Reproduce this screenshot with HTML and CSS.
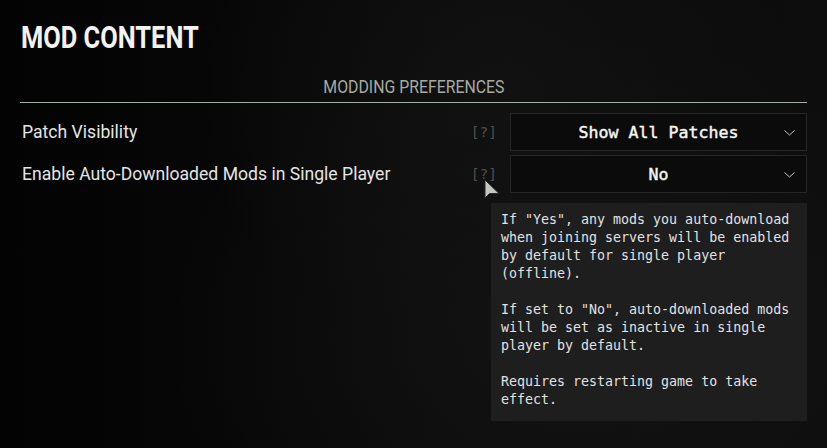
FILE: index.html
```html
<!DOCTYPE html>
<html lang="en">
<head>
    <meta charset="UTF-8">
    <meta name="viewport" content="width=device-width, initial-scale=1.0">
    <title>Mod Content</title>
    <link rel="stylesheet" href="styles.css">
</head>
<body>
    <main class="panel">
        <h1 class="title"><span>MOD CONTENT</span></h1>
        <div class="section-head"><span>MODDING PREFERENCES</span></div>
        <div class="rows">
            <div class="row">
                <span class="label">Patch Visibility</span>
                <span class="help">[?]</span>
                <div class="select">
                    <span class="value">Show All Patches</span>
                    <svg class="chevron" width="11" height="6" viewBox="0 0 11 6"><path d="M0.5 0.5 L5.5 5 L10.5 0.5" fill="none" stroke="#c9c9c9" stroke-width="1"/></svg>
                </div>
            </div>
            <div class="row">
                <span class="label">Enable Auto-Downloaded Mods in Single Player</span>
                <span class="help">[?]</span>
                <div class="select">
                    <span class="value">No</span>
                    <svg class="chevron" width="11" height="6" viewBox="0 0 11 6"><path d="M0.5 0.5 L5.5 5 L10.5 0.5" fill="none" stroke="#c9c9c9" stroke-width="1"/></svg>
                </div>
            </div>
        </div>

        <div class="tooltip">
            <p>If "Yes", any mods you auto-download<br>when joining servers will be enabled<br>by default for single player<br>(offline).</p>
            <p>If set to "No", auto-downloaded mods<br>will be set as inactive in single<br>player by default.</p>
            <p>Requires restarting game to take<br>effect.</p>
        </div>

        <svg class="cursor" width="16" height="22" viewBox="0 0 16 22">
            <path d="M1 1 L1 19 L5.5 14.5 L15 14.5 Z" fill="#c4c7c1" stroke="#2a2a2a" stroke-width="1"/>
        </svg>
    </main>
</body>
</html>
```

FILE: styles.css
```css
body {
    margin: 0;
    padding: 0;
    height: 448px;
    overflow: hidden;
    background:
        radial-gradient(ellipse 420px 300px at 70% 75%, #131313, rgba(0, 0, 0, 0)),
        radial-gradient(ellipse 300px 260px at 60% 20%, #111111, rgba(0, 0, 0, 0)),
        linear-gradient(90deg, #030303 0%, #0a0a0a 55%, #0d0d0d 100%);
    font-family: Roboto, "Liberation Sans", Arial, sans-serif;
    color: #e6e6e6;
}
.panel {
    position: relative;
    padding: 20px 20px 0 20px;
    height: 428px;
}
.title {
    margin: 0 0 0 1px;
    font-size: 31px;
    line-height: 36px;
    font-weight: bold;
    color: #f2f2f2;
}
.title span {
    display: inline-block;
    transform: scaleX(0.82);
    transform-origin: left center;
}
.section-head {
    margin-top: 20px;
    text-align: center;
    font-size: 18px;
    line-height: 22px;
    color: #a5aaa5;
    padding-bottom: 4px;
    border-bottom: 1px solid #a3aea4;
}
.section-head span {
    display: inline-block;
    transform: scaleX(0.88);
}
.rows {
    margin-top: 10px;
    display: flex;
    flex-direction: column;
    gap: 4px;
}
.row {
    display: flex;
    align-items: center;
    height: 38px;
}
.label {
    flex: 1;
    padding-left: 2px;
    font-size: 17.6px;
    color: #e4e4e4;
}
.help {
    font-family: "DejaVu Sans Mono", "Liberation Mono", monospace;
    font-size: 14.5px;
    color: #4e4e4e;
    margin-right: 13px;
}
.select {
    width: 295px;
    height: 36px;
    border: 1px solid #262626;
    background: #0b0b0b;
    display: flex;
    align-items: center;
    justify-content: center;
    position: relative;
}
.value {
    font-family: "DejaVu Sans Mono", "Liberation Mono", monospace;
    font-size: 16.6px;
    color: #f4f4f4;
    -webkit-text-stroke: 0.45px #f4f4f4;
}
.chevron {
    position: absolute;
    right: 11px;
    top: 16px;
}
.tooltip {
    position: absolute;
    left: 491px;
    top: 203px;
    width: 296px;
    padding: 8px 10px 12px 10px;
    background: #1e1e1e;
    font-family: "DejaVu Sans Mono", "Liberation Mono", monospace;
    font-size: 13.3px;
    line-height: 18px;
    color: #e2e2e2;
}
.tooltip p {
    margin: 0 0 18px 0;
}
.tooltip p:last-child {
    margin-bottom: 0;
}
.cursor {
    position: absolute;
    left: 484px;
    top: 179px;
}
```
